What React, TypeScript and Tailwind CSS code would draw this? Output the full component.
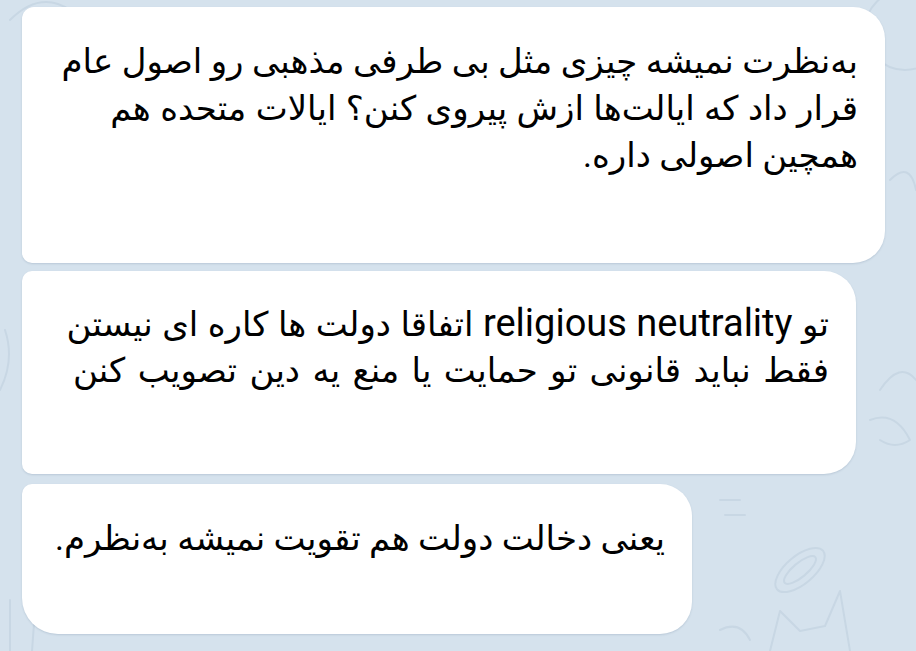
import React from "react";

const font = { fontFamily: 'Roboto, "DejaVu Sans", "Noto Sans", sans-serif' };

function Doodles() {
  return (
    <svg
      className="absolute inset-0 pointer-events-none"
      width="916"
      height="651"
      viewBox="0 0 916 651"
      fill="none"
      stroke="#c8d7e4"
      strokeWidth="2"
      strokeLinecap="round"
      strokeLinejoin="round"
    >
      <circle cx="905" cy="30" r="40" />
      <path d="M10 20 q30 -30 60 -10" />
      <path d="M890 180 q20 -20 26 10" />
      <path d="M880 390 q20 -30 36 -10 M870 420 q25 -10 40 20 q-15 10 -30 0" />
      <ellipse cx="800" cy="570" rx="30" ry="14" transform="rotate(-40 800 570)" />
      <ellipse cx="800" cy="570" rx="20" ry="7" transform="rotate(-40 800 570)" />
      <path d="M770 651 l10 -40 l20 20 l25 -5 l15 -35 l10 60" />
      <path d="M5 330 q10 30 -5 60" />
      <path d="M10 600 l0 51 M35 610 l-3 41" />
      <path d="M720 630 q20 -10 30 10" />
      <path d="M720 500 l20 0 M725 515 l20 0" />
    </svg>
  );
}

function Bubble({
  lines,
  className,
}: {
  lines: React.ReactNode[];
  className: string;
}) {
  return (
    <div
      dir="rtl"
      className={
        "bg-white shadow-[0_1px_2px_rgba(60,90,120,0.18)] pr-[27px] pl-[10px] text-black text-[34px] leading-[47px] text-right " +
        className
      }
      style={font}
    >
      {lines.map((l, i) => (
        <div key={i} className="whitespace-nowrap h-[47px]">
          {l}
        </div>
      ))}
    </div>
  );
}

export default function App() {
  return (
    <div className="relative w-[916px] h-[651px] overflow-hidden bg-[#d5e2ed]">
      <Doodles />
      <div className="relative flex flex-col items-start pl-[22px] pt-[7px]">
        <Bubble
          className="w-[863px] h-[256px] pt-[31px] rounded-tl-[12px] rounded-tr-[32px] rounded-br-[32px] rounded-bl-[10px]"
          lines={[
            "به‌نظرت نمیشه چیزی مثل بی طرفی مذهبی رو اصول عام",
            <span className="[word-spacing:1px]">قرار داد که ایالت‌ها ازش پیروی کنن؟ ایالات متحده هم</span>,
            "همچین اصولی داره.",
          ]}
        />
        <Bubble
          className="mt-[8px] w-[834px] h-[203px] pt-[29px] rounded-tl-[10px] rounded-tr-[32px] rounded-br-[32px] rounded-bl-[10px]"
          lines={[
            <span className="[word-spacing:1px]">
              تو <span dir="ltr" className="text-[38px] [word-spacing:0px]">religious neutrality</span> اتفاقا دولت ها کاره ای نیستن
            </span>,
            <span className="[word-spacing:4px]">فقط نباید قانونی تو حمایت یا منع یه دین تصویب کنن</span>,
          ]}
        />
        <Bubble
          className="mt-[10px] w-[670px] h-[150px] pt-[31px] rounded-tl-[10px] rounded-tr-[32px] rounded-br-[32px] rounded-bl-[36px]"
          lines={["یعنی دخالت دولت هم تقویت نمیشه به‌نظرم."]}
        />
      </div>
    </div>
  );
}
